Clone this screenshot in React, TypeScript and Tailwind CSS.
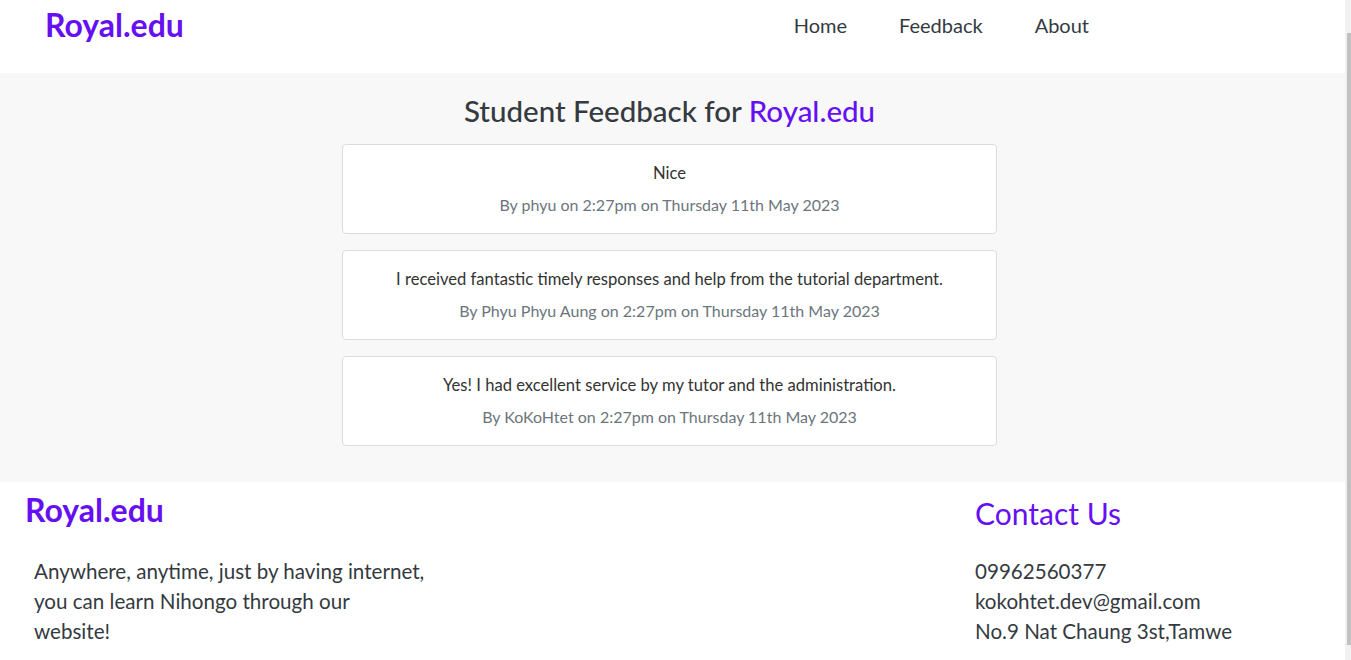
import React from "react";

const feedbacks = [
  { text: "Nice", by: "phyu" },
  {
    text: "I received fantastic timely responses and help from the tutorial department.",
    by: "Phyu Phyu Aung",
  },
  {
    text: "Yes! I had excellent service by my tutor and the administration.",
    by: "KoKoHtet",
  },
];

export default function App() {
  return (
    <div
      className="relative w-[1351px] h-[660px] overflow-hidden bg-white text-[#343a40]"
      style={{ fontFamily: "Lato, 'Noto Sans', sans-serif" }}
    >
      <div className="w-[1345px]">
        {/* Navbar */}
        <nav className="h-[73px] flex items-start justify-between pl-[45px] pr-[256px] bg-white">
          <a className="mt-[7px] text-[32px] leading-[36px] font-bold text-[#6610f2]">Royal.edu</a>
          <ul className="flex gap-[52px] mt-[10px] text-[20px] leading-[30px] text-[#343a40]">
            <li>Home</li>
            <li>Feedback</li>
            <li>About</li>
          </ul>
        </nav>

        {/* Feedback section */}
        <section className="bg-[#f8f8f8] pt-[21px] pb-[36px] pr-[6px]">
          <h2 className="text-center text-[29.5px] leading-[34px] font-medium mb-4 text-[#343a40]">
            Student Feedback for <span className="text-[#6610f2]">Royal.edu</span>
          </h2>
          <div className="flex flex-col items-center gap-4">
            {feedbacks.map((f) => (
              <div
                key={f.by}
                className="w-[655px] bg-white border border-[#dcdcdc] rounded-[4px] p-4 text-center leading-[24px]"
              >
                <p className="mb-2 text-[16.6px] text-[#333333]">{f.text}</p>
                <p className="text-[16px] text-[#6c757d]">
                  By {f.by} on 2:27pm on Thursday 11th May 2023
                </p>
              </div>
            ))}
          </div>
        </section>

        {/* Footer */}
        <footer className="flex justify-between pl-[25px] pr-[90px] bg-white">
          <div className="pt-[10px]">
            <h3 className="text-[32px] leading-[36px] font-bold text-[#6610f2]">Royal.edu</h3>
            <p className="mt-[28px] ml-[9px] text-[20.6px] leading-[30px] text-[#343a40]">
              Anywhere, anytime, just by having internet,
              <br />
              you can learn Nihongo through our
              <br />
              website!
            </p>
          </div>
          <div className="pt-[13px] w-[280px]">
            <h3 className="text-[30px] leading-[36px] font-normal text-[#6610f2]">Contact Us</h3>
            <div className="mt-[25px] text-[20.6px] leading-[30px] text-[#343a40] whitespace-nowrap">
              <p>09962560377</p>
              <p>kokohtet.dev@gmail.com</p>
              <p>No.9 Nat Chaung 3st,Tamwe</p>
            </div>
          </div>
        </footer>
      </div>

      {/* Scrollbar */}
      <div className="absolute right-0 top-0 w-[6px] h-[660px] bg-[#f1f1f1]">
        <div className="absolute left-[2px] top-[33px] w-[4px] h-[612px] bg-[#c1c1c1]" />
      </div>
    </div>
  );
}
